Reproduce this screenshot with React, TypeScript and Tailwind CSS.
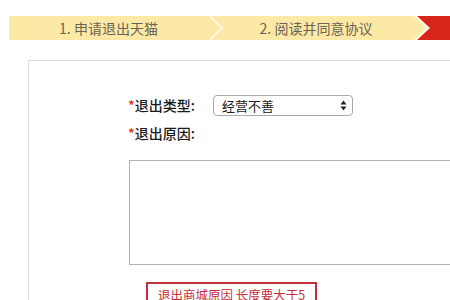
export default function App() {
  return (
    <div className="h-[300px] w-[450px] overflow-hidden bg-white font-['Noto_Sans_CJK_SC',sans-serif]">
      {/* Step bar */}
      <div className="ml-[9px] mt-4 flex h-6 w-[600px]">
        <div className="flex w-[199px] items-center justify-center bg-[#fce9a6] text-[14px] text-[#6b6456]">
          1. 申请退出天猫
        </div>
        <svg width="16" height="24" viewBox="0 0 16 24" className="shrink-0">
          <rect width="16" height="24" fill="#fce9a6" />
          <polyline points="2,0 14,12 2,24" fill="none" stroke="#fffaf0" strokeWidth="2" opacity="0.85" />
        </svg>
        <div className="flex w-[184px] items-center justify-center bg-[#fce9a6] text-[14px] text-[#6b6456]">
          2. 阅读并同意协议
        </div>
        <svg width="24" height="24" viewBox="0 0 24 24" className="shrink-0">
          <rect width="24" height="24" fill="#fce9a6" />
          <polygon points="9,0 24,0 24,24 9,24 22,12" fill="#d9261c" />
          <polyline points="7,0 20,12 7,24" fill="none" stroke="#fff6ec" strokeWidth="2" />
        </svg>
        <div className="flex-1 bg-[#d9261c]" />
      </div>

      {/* Form panel */}
      <div className="ml-[28px] mt-5 h-[400px] w-[600px] border border-[#dcdcdc] pl-[99px] pt-[34px]">
        <div className="flex h-[21px] items-center">
          <div className="flex w-[85px] items-center text-[14px] font-medium text-[#1a1a1a]">
            <span className="text-[#e0301e]">*</span>退出类型:
          </div>
          <div className="flex h-[21px] w-[140px] items-center justify-between rounded-[4px] border border-[#a9a9a9] pl-2 pr-[5px] text-[13px] text-[#222]">
            <span>经营不善</span>
            <svg width="7" height="11" viewBox="0 0 7 11">
              <polygon points="3.5,0.5 6.5,4.5 0.5,4.5" fill="#222" />
              <polygon points="3.5,10.5 6.5,6.5 0.5,6.5" fill="#222" />
            </svg>
          </div>
        </div>
        <div className="mt-[7px] flex h-5 items-center text-[14px] font-medium text-[#1a1a1a]">
          <span className="text-[#e0301e]">*</span>退出原因:
        </div>
        <div className="ml-px mt-[17px] h-[105px] w-[400px] border border-[#b3b3b3]" />
        <div className="ml-[18px] mt-[17px] inline-block border-2 border-[#c4303a] px-[10px] py-[2px] text-[12.5px] text-[#c4303a]">
          退出商城原因 长度要大于5
        </div>
      </div>
    </div>
  );
}
